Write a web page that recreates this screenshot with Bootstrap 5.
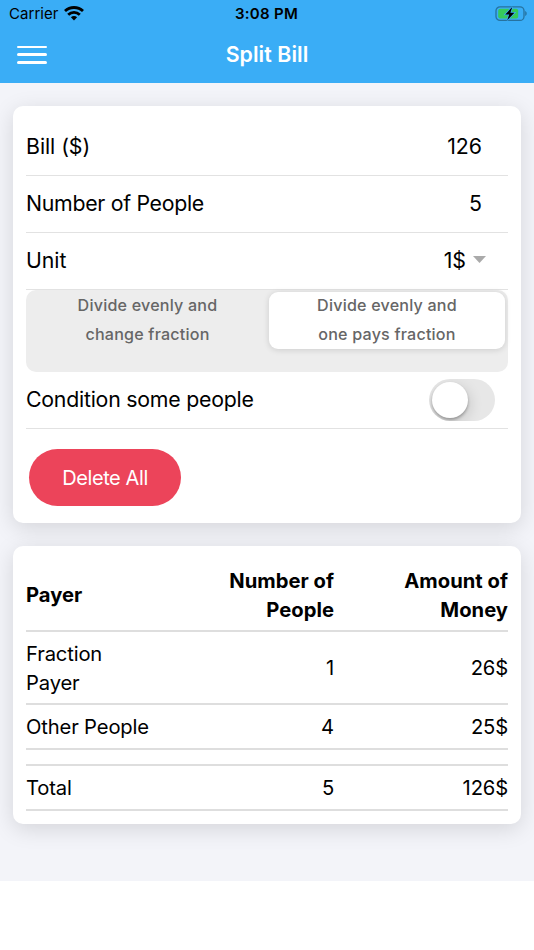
<!DOCTYPE html>
<html lang="en">
<head>
<meta charset="utf-8">
<meta name="viewport" content="width=device-width, initial-scale=1">
<title>Split Bill</title>
<link href="https://cdn.jsdelivr.net/npm/bootstrap@5.3.0/dist/css/bootstrap.min.css" rel="stylesheet">
<style>
body{font-family:Inter,"Liberation Sans",sans-serif;color:#000;background:#fff;font-size:21.3px;line-height:28.5px;overflow:hidden}
.app-top{background:#3aadf6;height:83px}
.status-bar{height:28px;padding:0 7px 0 9px;font-size:15px;line-height:28px}
.status-bar .carrier{letter-spacing:.05px}
.status-bar .wifi{margin:0 0 2px 5px}
.status-bar .clock{font-weight:600;letter-spacing:.3px;margin-right:3px}
.title-bar{height:55px;padding:0 17px 3px}
.title-bar h1{font-size:21.3px;font-weight:600;letter-spacing:.08px;line-height:52px}
.menu-btn{width:30px;height:18px;margin-top:1px}
.menu-btn span{height:2.6px;border-radius:2px;background:#fff}
.page-area{background:#f3f4f9;height:798px;padding:23px 13px 0}
.panel{background:#fff;border-radius:10px;box-shadow:0 5px 22px rgba(0,0,0,.13);padding:13px}
.panel-form{height:416.5px}
.panel-table{height:278px;margin-top:23.5px}
.field{height:57px;border-bottom:1px solid #e2e2e2;padding:0 26px 2px 0}
.field-label{letter-spacing:-.3px}
.field-label.short{letter-spacing:-.05px}
.caret{width:13px;height:7px;background:#aaa;clip-path:polygon(0 0,100% 0,50% 100%);margin:0 -4px 1px 7px}
.segment{height:82px;background:#ededed;border-radius:10px;padding:2px;font-size:16.1px;line-height:28.5px;font-weight:500;color:#666;letter-spacing:.2px;text-align:center}
.segment .choice{height:57px;border-radius:9px}
.segment .choice>span{display:block;margin-top:-1px}
.segment .choice.active{background:#fff;box-shadow:0 1px 6px rgba(0,0,0,.14);margin:0 1px 0 2px}
.field.toggle-row{padding:0 13px 0 0}
.toggle-row .field-label{margin-bottom:2px;letter-spacing:-.23px}
.switch-track{width:66px;height:42px;border-radius:21px;background:#e7e7e7;padding:3px 3px;overflow:hidden}
.switch-knob{width:36px;height:36px;border-radius:50%;background:#fff;box-shadow:0 2px 3px rgba(0,0,0,.28),2px 4px 14px rgba(0,0,0,.14)}
.btn.btn-delete{background:#ec445a;color:#fff;width:152px;height:57px;margin:20px 0 0 3px;font-size:20px;letter-spacing:-.4px;padding:0}
.bill-table{color:#000;font-size:20.2px;margin:0;table-layout:fixed;letter-spacing:-.15px}
.bill-table>:not(caption)>*>*{padding:8px 0 6px;border-bottom:2px solid #dedede;background:none;color:#000;vertical-align:middle}
.bill-table th{font-weight:700;letter-spacing:.02px}
.bill-table .spacer td{padding:0;height:16.5px}
</style>
<script src="https://cdn.jsdelivr.net/npm/bootstrap@5.3.0/dist/js/bootstrap.bundle.min.js"></script>
</head>
<body>
<header class="app-top">
  <div class="status-bar row g-0 align-items-center">
    <div class="col d-flex align-items-center"><span class="carrier">Carrier</span>
      <svg class="wifi" width="20" height="15" viewBox="0 0 20 15" fill="none" stroke="#000" stroke-width="2.8"><path d="M1 5.1C6 .3 14 .3 19 5.1"/><path d="M4.2 8.8c3.3-3.2 8.3-3.2 11.6 0"/><path d="M6.9 11.3c1.8-1.7 4.4-1.7 6.2 0L10 14.5z" fill="#000" stroke="none"/></svg>
    </div>
    <div class="col-auto clock">3:08 PM</div>
    <div class="col d-flex justify-content-end align-items-center">
      <svg width="32" height="16" viewBox="0 0 32 16"><rect x="1" y=".8" width="28" height="13.6" rx="4" fill="none" stroke="#26729f" stroke-width="1.3"/><path d="M30.2 5c2 1 2 4 0 5z" fill="#26729f"/><rect x="3.2" y="2.8" width="20" height="9.8" rx="2" fill="#36c95b"/><path d="M17.3 1 10.2 8.4h4l-2 5.8 7.2-7.4h-4z" fill="#000" stroke="#3aadf6" stroke-width="1.6" paint-order="stroke"/></svg>
    </div>
  </div>
  <div class="title-bar row g-0 align-items-center">
    <div class="col"><div class="menu-btn d-flex flex-column justify-content-between"><span></span><span></span><span></span></div></div>
    <h1 class="col-auto m-0 text-white">Split Bill</h1>
    <div class="col"></div>
  </div>
</header>
<main class="page-area">
  <section class="panel panel-form">
    <div class="field d-flex justify-content-between align-items-center"><span class="field-label short">Bill ($)</span><span>126</span></div>
    <div class="field d-flex justify-content-between align-items-center"><span class="field-label">Number of People</span><span>5</span></div>
    <div class="field d-flex justify-content-between align-items-center"><span class="field-label short">Unit</span><span class="d-flex align-items-center">1$<i class="caret"></i></span></div>
    <div class="segment d-flex">
      <div class="choice col-6"><span>Divide evenly and<br>change fraction</span></div>
      <div class="choice active col"><span>Divide evenly and<br>one pays fraction</span></div>
    </div>
    <div class="field toggle-row d-flex justify-content-between align-items-center"><span class="field-label">Condition some people</span><div class="switch-track"><div class="switch-knob"></div></div></div>
    <button type="button" class="btn btn-delete rounded-pill border-0">Delete All</button>
  </section>
  <section class="panel panel-table">
    <table class="table bill-table">
      <colgroup><col style="width:134px"><col style="width:174px"><col></colgroup>
      <thead><tr><th>Payer</th><th class="text-end">Number of<br>People</th><th class="text-end">Amount of<br>Money</th></tr></thead>
      <tbody>
        <tr><td>Fraction<br>Payer</td><td class="text-end">1</td><td class="text-end">26$</td></tr>
        <tr><td>Other People</td><td class="text-end">4</td><td class="text-end">25$</td></tr>
        <tr class="spacer"><td colspan="3"></td></tr>
        <tr><td>Total</td><td class="text-end">5</td><td class="text-end">126$</td></tr>
      </tbody>
    </table>
  </section>
</main>
</body>
</html>
